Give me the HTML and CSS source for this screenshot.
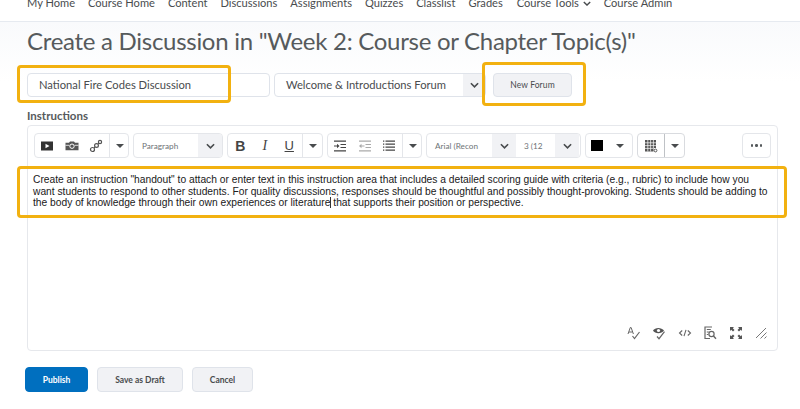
FILE: index.html
```html
<!DOCTYPE html>
<html lang="en">
<head>
<meta charset="utf-8">
<title>Create a Discussion</title>
<link rel="stylesheet" href="styles.css">
</head>
<body>
<div class="page">
  <nav class="nav">
    <a>My Home</a><a>Course Home</a><a>Content</a><a>Discussions</a><a>Assignments</a><a>Quizzes</a><a>Classlist</a><a>Grades</a>
    <a class="has-chev">Course Tools <svg class="nav-chev" viewBox="0 0 10 6"><path d="M1 1l4 4 4-4" fill="none" stroke="#494c4e" stroke-width="1.7"/></svg></a>
    <a>Course Admin</a>
  </nav>
  <main class="main">
    <h1 class="title">Create a Discussion in "Week 2: Course or Chapter Topic(s)"</h1>
    <div class="form-row">
      <div class="field name-field">National Fire Codes Discussion</div>
      <div class="field forum-field">
        <span class="forum-text">Welcome &amp; Introductions Forum</span>
        <span class="forum-chev"><svg class="chev" viewBox="0 0 10 6"><path d="M1 1l4 4 4-4" fill="none" stroke="#494c4e" stroke-width="1.8"/></svg></span>
      </div>
      <button class="btn new-forum">New Forum</button>
    </div>
    <div class="label">Instructions</div>
    <section class="editor">
      <div class="toolbar">
        <div class="group g-media">
          <span class="tool"><svg class="ic" viewBox="0 0 14 14"><path d="M1 2.500h12v9H1z" fill="#333"/><path d="M5.500 4.800l4 2.200-4 2.200z" fill="#fff"/></svg></span>
          <span class="tool"><svg class="ic" viewBox="0 0 14 14"><path d="M.5 3.800h3.500l1-1.300h4l1 1.300h3.500v7.400H.5z" fill="#555"/><path d="M.5 6.300h3.800M9.700 6.300h3.800" stroke="#fff" stroke-width=".8"/><circle cx="7" cy="7.200" r="2.200" fill="none" stroke="#fff" stroke-width="1"/></svg></span>
          <span class="tool"><svg class="ic" viewBox="0 0 14 14"><g fill="none" stroke="#555" stroke-width="1.200"><circle cx="3.500" cy="10.500" r="2"/><circle cx="7.500" cy="6.500" r="1.900"/><circle cx="11" cy="3" r="1.600"/><path d="M5 9l1-1M9 5l.8-.8"/></g></svg></span>
          <span class="drop"><i class="caret"></i></span>
        </div>
        <div class="group g-para">
          <span class="sel-text para-text">Paragraph</span>
          <span class="sel-chev para-chev"><svg class="chev" viewBox="0 0 10 6"><path d="M1 1l4 4 4-4" fill="none" stroke="#494c4e" stroke-width="1.800"/></svg></span>
        </div>
        <div class="group g-style">
          <span class="tool glyph bold">B</span>
          <span class="tool glyph ital">I</span>
          <span class="tool glyph under">U</span>
          <span class="drop"><i class="caret"></i></span>
        </div>
        <div class="group g-list">
          <span class="tool"><svg class="ic" viewBox="0 0 14 14"><path d="M1 1.500h12v1.200H1zM1 11.300h12v1.200H1zM7.500 5h5.500v1H7.500zM7.500 8h5.500v1H7.500z" fill="#444"/><path d="M1 6.400h3V4.800l2.500 2.200L4 9.200V7.600H1z" fill="#444"/></svg></span>
          <span class="tool"><svg class="ic" viewBox="0 0 14 14"><path d="M1 1.500h12v1.200H1zM1 11.300h12v1.200H1zM7.500 5h5.500v1H7.500zM7.500 8h5.500v1H7.500z" fill="#aaa"/><path d="M6.500 6.400h-3V4.800L1 7l2.500 2.200V7.600h3z" fill="#aaa"/></svg></span>
          <span class="tool"><svg class="ic" viewBox="0 0 14 14"><path d="M3.500 1.500H13v1.200H3.500zM3.500 4.500H13v1.200H3.500zM3.500 7.500H13v1.200H3.500zM3.500 10.500H13v1.200H3.500z" fill="#444"/><path d="M1 1.500h1.300v1.200H1zM1 4.500h1.300v1.200H1zM1 7.500h1.300v1.200H1zM1 10.500h1.300v1.200H1z" fill="#444"/></svg></span>
          <span class="drop"><i class="caret"></i></span>
        </div>
        <div class="group g-font">
          <span class="sel-text font-text">Arial (Recon</span>
          <span class="sel-chev"><svg class="chev" viewBox="0 0 10 6"><path d="M1 1l4 4 4-4" fill="none" stroke="#494c4e" stroke-width="1.800"/></svg></span>
          <span class="sel-text size-text">3 (12</span>
          <span class="sel-chev"><svg class="chev" viewBox="0 0 10 6"><path d="M1 1l4 4 4-4" fill="none" stroke="#494c4e" stroke-width="1.800"/></svg></span>
        </div>
        <div class="group g-color">
          <span class="swatch"></span>
          <i class="caret"></i>
        </div>
        <div class="group g-table">
          <span class="tool table-tool"><svg class="ic" viewBox="0 0 14 14"><path d="M1 1h11v8H9.500v3.500H1z" fill="#555"/><path d="M3.800 1v11.500M6.600 1v11.500M9.400 1v8M1 3.800h11M1 6.600h11M1 9.400h8.500" stroke="#fff" stroke-width=".7"/><circle cx="11.500" cy="11.500" r="1.400" fill="none" stroke="#555"/></svg></span>
          <span class="drop table-drop"><i class="caret"></i></span>
        </div>
        <div class="group g-more"><i></i><i></i><i></i></div>
      </div>
      <div class="content">
        <p>Create an instruction "handout" to attach or enter text in this instruction area that includes a detailed scoring guide with criteria (e.g., rubric) to include how you<br>want students to respond to other students. For quality discussions, responses should be thoughtful and possibly thought-provoking. Students should be adding to<br>the body of knowledge through their own experiences or literature that supports their position or perspective.</p>
      </div>
      <div class="status">
        <svg class="ic" viewBox="0 0 14 14"><path d="M1 8l2.300-6.500h.8L6.400 8M2 6h3.400" fill="none" stroke="#666" stroke-width="1"/><path d="M5.500 10l2 2.500 5-6.500" fill="none" stroke="#666" stroke-width="1.200"/></svg>
        <svg class="ic" viewBox="0 0 14 14"><path d="M1 4.500C3 1 9.500 1 12 4.500 9.500 8 3 8 1 4.500z" fill="#555"/><circle cx="6.500" cy="4.500" r="1.600" fill="#fff"/><path d="M5 10.500l2 2.200 5.500-7" fill="none" stroke="#666" stroke-width="1.200"/></svg>
        <svg class="ic" viewBox="0 0 14 14"><path d="M4.200 4.500L1.500 7l2.700 2.500M9.800 4.500L12.500 7l-2.700 2.500M8 3.800L6 10.200" fill="none" stroke="#666" stroke-width="1.100"/></svg>
        <svg class="ic" viewBox="0 0 14 14"><path d="M9 1H2v11.500h5M3.800 3.500h4M3.800 6h2M3.800 8.500h1.500" fill="none" stroke="#666" stroke-width="1.200"/><circle cx="8.500" cy="8" r="2.600" fill="none" stroke="#666" stroke-width="1.200"/><path d="M10.500 10l2.500 2.800" stroke="#666" stroke-width="1.400"/></svg>
        <svg class="ic" viewBox="0 0 14 14"><path d="M1 1h4L3.800 2.200 5.500 4 4 5.500 2.200 3.800 1 5zM13 1v4l-1.200-1.200L10 5.500 8.500 4l1.700-1.800L9 1zM1 13V9l1.200 1.200L4 8.500 5.500 10l-1.700 1.800L5 13zM13 13H9l1.200-1.200L8.500 10 10 8.500l1.800 1.700L13 9z" fill="#555"/></svg>
        <svg class="ic" viewBox="0 0 14 14"><path d="M2 12L12 2M6.500 12.500L12.500 6.500M10.500 12.500l2-2" fill="none" stroke="#777" stroke-width="1"/></svg>
      </div>
    </section>
    <div class="actions">
      <button class="btn primary">Publish</button>
      <button class="btn draft">Save as Draft</button>
      <button class="btn cancel">Cancel</button>
    </div>
  </main>
  <div class="hl hl-name"></div>
  <div class="hl hl-forum"></div>
  <div class="hl hl-text"></div>
  <div class="text-cursor"></div>
</div>
</body>
</html>
```

FILE: styles.css
```css
* { box-sizing: border-box; }
html, body { margin: 0; padding: 0; background: #fff; }
body { font-family: Lato, "Open Sans", sans-serif; color: #494c4e; }
.page { position: relative; width: 800px; height: 409px; overflow: hidden; }

.nav { height: 22px; border-bottom: 1px solid #e6eaf0; display: flex; align-items: flex-start; padding-left: 27px; font-size: 11.1px; line-height: 14px; overflow: hidden; }
.nav a { display: block; margin-top: -4px; margin-right: 13px; white-space: nowrap; }
.nav a:nth-child(8) { margin-right: 14px; }
.nav a.has-chev { margin-right: 13px; }
.nav-chev { width: 8px; height: 5px; margin-left: 1px; vertical-align: 1px; }

.main { height: 387px; padding: 0 22px 0 27px; background: linear-gradient(#f9fafc 0, #fff 60px); }
.title { margin: 0; padding-top: 3px; height: 51px; font-size: 24px; letter-spacing: -.28px; line-height: 31px; font-weight: 400; color: #565a5c; white-space: nowrap; }
.form-row { display: flex; height: 24px; margin-bottom: 12px; }
.field { height: 24px; border: 1px solid #dfe3ea; border-radius: 4px; background: #fff; font-size: 11.2px; line-height: 22px; }
.name-field { width: 243px; padding-left: 11px; }
.forum-field { width: 212px; margin-left: 4px; display: flex; justify-content: space-between; padding-left: 11px; overflow: hidden; }
.forum-chev { width: 22px; background: #f1f2f5; display: flex; align-items: center; justify-content: center; }
.chev { width: 9px; height: 6px; display: block; }
.btn { border: 1px solid #dfe3ea; border-radius: 4px; background: #f1f2f5; font-family: Lato, sans-serif; color: #494c4e; font-weight: 700; font-size: 8.5px; padding: 0; height: 25px; }
.new-forum { width: 79px; height: 24px; margin-left: 7px; font-weight: 400; font-size: 8.5px; letter-spacing: .1px; }

.label { font-size: 11.500px; font-weight: 700; color: #565a5c; line-height: 14px; height: 16px; }
.editor { width: 751px; height: 226px; border: 1px solid #e6e8ec; border-radius: 4px; background: #fff; display: flex; flex-direction: column; }
.toolbar { display: flex; gap: 4px; padding: 7px 6px 0 6px; height: 33px; }
.group { height: 25px; border: 1px solid #e4e6ea; border-radius: 4px; display: flex; align-items: center; background: #fff; overflow: hidden; flex: none; }
.tool { width: 24.500px; height: 100%; display: flex; align-items: center; justify-content: center; flex: none; }
.ic { width: 14px; height: 14px; display: block; flex: none; }
.drop { width: 21px; height: 100%; border-left: 1px solid #e4e6ea; display: flex; align-items: center; justify-content: center; flex: none; }
.caret { display: block; width: 0; height: 0; border-left: 4.500px solid transparent; border-right: 4.500px solid transparent; border-top: 4.500px solid #494c4e; }
.g-media { width: 95px; }
.g-para { width: 90px; justify-content: space-between; }
.sel-text { font-size: 8.200px; color: #6e7376; white-space: nowrap; }
.para-text { padding-left: 8px; }
.sel-chev { width: 24px; height: 100%; background: #f1f2f5; display: flex; align-items: center; justify-content: center; flex: none; }
.g-style { width: 96px; }
.glyph { font-family: "Liberation Sans", Arial, sans-serif; font-size: 14px; color: #444; }
.bold { font-weight: 700; }
.ital { font-family: "Liberation Serif", serif; font-style: italic; font-size: 14px; }
.under { text-decoration: underline; font-size: 13px; }
.g-list { width: 95px; }
.g-font { width: 155px; }
.font-text { width: 65px; padding-left: 8px; flex: none; }
.size-text { width: 39px; padding-left: 8px; flex: none; }
.g-color { width: 48px; padding: 0 8px 0 5px; justify-content: space-between; }
.swatch { width: 12px; height: 11px; background: #000; }
.g-table { width: 48px; border-color: #d9dbdf; }
.table-tool { width: 26px; }
.table-drop { border-left-color: #bfc2c6; }
.g-more { width: 29px; margin-left: auto; justify-content: center; gap: 2px; }
.g-more i { width: 2.500px; height: 2.500px; border-radius: 50%; background: #565a5c; }

.content { flex: 1; padding: 15px 5px 0 5px; font-family: "Liberation Sans", Arial, sans-serif; font-size: 10.250px; line-height: 11.600px; color: #202020; white-space: nowrap; }
.content p { margin: 0; }
.status { height: 27px; display: flex; justify-content: flex-end; align-items: flex-start; gap: 11.500px; padding: 3px 9px 0 0; }

.actions { display: flex; gap: 9px; margin: 16px 0 0 -2px; }
.primary { width: 63px; background: #006fbf; border-color: #006fbf; color: #fff; }
.draft { width: 86px; }
.cancel { width: 61px; }

.hl { position: absolute; border: 3px solid #f2b110; border-radius: 4px; pointer-events: none; }
.hl-name { left: 17px; top: 65px; width: 214px; height: 38px; }
.hl-forum { left: 482px; top: 62px; width: 104px; height: 44px; }
.hl-text { left: 17px; top: 166px; width: 770px; height: 52px; }
.text-cursor { position: absolute; left: 330px; top: 197px; width: 1px; height: 11px; background: #333; }
```
